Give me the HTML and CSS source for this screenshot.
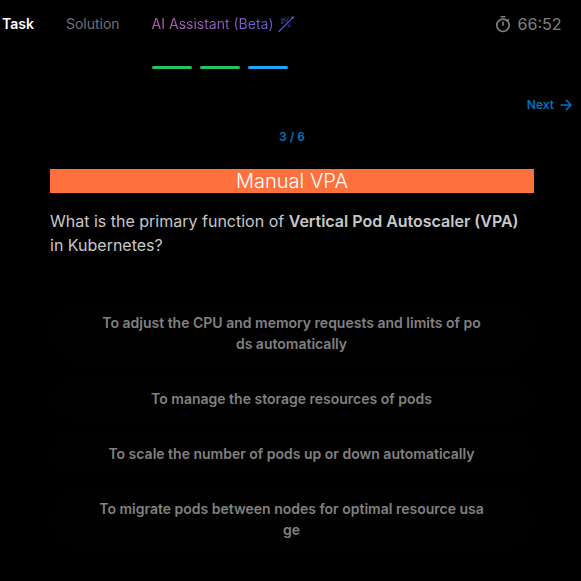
FILE: index.html
```
<!DOCTYPE html>
<html lang="en">
<head>
<meta charset="utf-8">
<title>Manual VPA</title>
<link rel="stylesheet" href="styles.css">
</head>
<body>
<header class="topbar">
  <nav class="tabs">
    <span class="tab active">Task</span>
    <span class="tab">Solution</span>
    <span class="tab assistant"><span class="gradient">AI Assistant (Beta)</span>
      <svg class="wand" viewBox="0 0 18 18" fill="none" stroke="#5656d6" stroke-width="1.2" stroke-linecap="round">
        <path d="M2 16.5 15.8 2.7"/>
        <path d="M15.2 2.2h.9v.9h-.9z" stroke-width="1.4"/>
        <path d="M4.2 4.1l2.3.7 1.5-1.7.2 2.3 2.2 1M4.5 4.3l1.2 2-1.2 2 2.4-.4M10.5 4.5l.7-1.6M12 11.8l1.4-.4M13.3 8.2v1M11.2 9.5l.4 1.7" opacity=".55"/>
      </svg>
    </span>
  </nav>
  <div class="timer">
    <svg class="clock" viewBox="0 0 16 18" fill="none" stroke="currentColor" stroke-width="1.6">
      <circle cx="8" cy="10.3" r="6.2"/>
      <path d="M5.6 1.7h4.8M8 6.4v4.3M12.5 5.8l1.4-1.4"/>
    </svg>
    <span>66:52</span>
  </div>
</header>
<div class="progress"><i class="done"></i><i class="done"></i><i class="current"></i></div>
<div class="next"><span>Next</span>
  <svg viewBox="0 0 12 12" fill="none" stroke="currentColor" stroke-width="1.5" stroke-linecap="round" stroke-linejoin="round"><path d="M1 6h10M6.4 1.4 11 6l-4.6 4.6"/></svg>
</div>
<main class="quiz">
  <div class="count">3 / 6</div>
  <h1>Manual VPA</h1>
  <p class="question">What is the primary function of <strong>Vertical Pod Autoscaler (VPA)</strong> in Kubernetes?</p>
  <div class="answers">
    <button>To adjust the CPU and memory requests and limits of po<br>ds automatically</button>
    <button>To manage the storage resources of pods</button>
    <button>To scale the number of pods up or down automatically</button>
    <button>To migrate pods between nodes for optimal resource usa<br>ge</button>
  </div>
</main>
</body>
</html>
```
FILE: styles.css
```
* { box-sizing: border-box; }
body {
  margin: 0;
  height: 581px;
  overflow: hidden;
  background: #000;
  color: #c8c8c8;
  font-family: Inter, sans-serif;
}
.topbar {
  display: flex;
  justify-content: space-between;
  align-items: center;
  height: 48px;
  padding: 0 19.5px 0 2px;
}
.tabs { display: flex; gap: 32px; font-size: 14px; line-height: 20px; }
.tab { color: #71717a; }
.active { color: #fff; font-weight: 600; }
.assistant { display: flex; align-items: center; gap: 3px; }
.gradient {
  background: linear-gradient(90deg, #bd5cab, #6859c9);
  background-clip: text;
  color: transparent;
}
.wand { width: 18px; height: 18px; }
.timer { display: flex; align-items: center; gap: 7px; color: #808080; font-size: 16px; line-height: 24px; }
.clock { width: 16px; height: 18px; }
.progress { display: flex; gap: 8px; margin: 18px 0 0 152px; }
.progress i { width: 40px; height: 3px; border-radius: 2px; }
.done { background: #22c55e; }
.current { background: #1ca7f8; }
.next {
  display: flex;
  justify-content: flex-end;
  align-items: center;
  gap: 6px;
  margin-top: 28px;
  padding-right: 9px;
  color: #0072bd;
  font-size: 12px;
  font-weight: 600;
  line-height: 16px;
}
.next svg { width: 12px; height: 12px; }
.quiz { width: 484px; margin: 16px 0 0 50px; }
.count { color: #0072bd; font-size: 12px; font-weight: 600; line-height: 16px; text-align: center; }
h1 {
  margin: 24px 0 16px;
  background: #ff703f;
  color: #fff;
  font-size: 20px;
  font-weight: 300;
  line-height: 24px;
  text-align: center;
}
.question { margin: 0; font-size: 16px; line-height: 24px; }
strong { font-weight: 600; }
.answers { display: flex; flex-direction: column; gap: 12px; margin-top: 44px; }
button {
  padding: 11px 41px 11px 40px;
  border: 0;
  border-radius: 32px;
  background: #010101;
  color: #808080;
  font: 600 14px/21px Inter, sans-serif;
  text-align: center;
}
```
